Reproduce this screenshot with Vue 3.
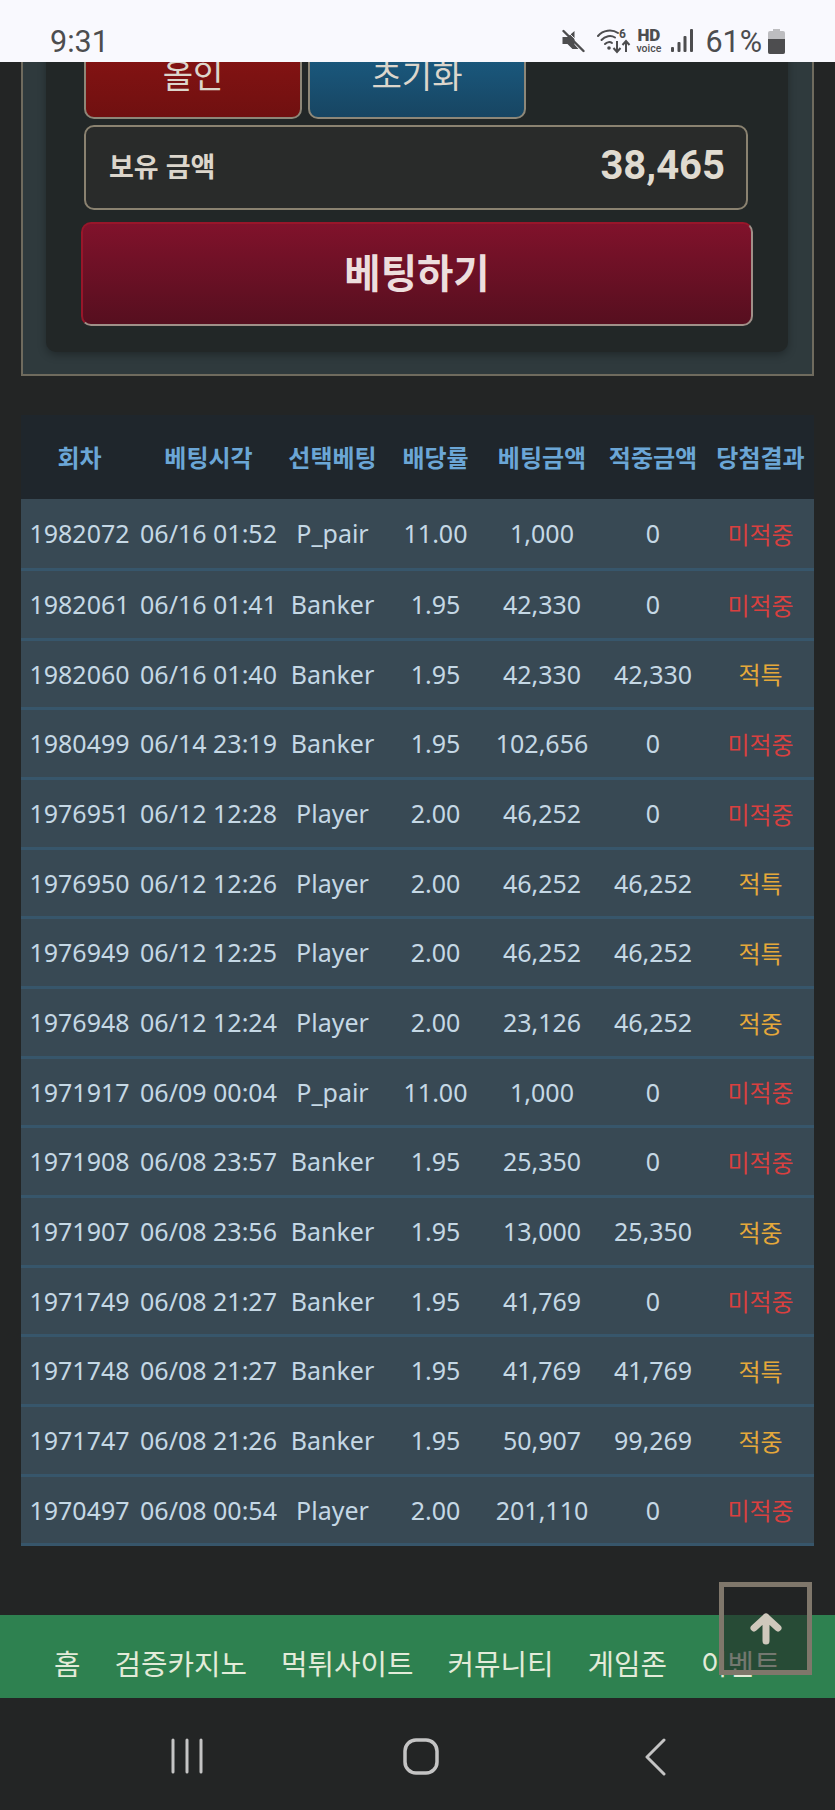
<template>
  <div class="screen">
    <div class="status-bar">
      <span class="clock">9:31</span>
      <div class="status-icons">
        <svg class="ic-mute" width="24" height="24" viewBox="0 0 23 24">
          <path d="M1 8h5l7-6v13.5L17 20H11l-5-5H1z" fill="#4d4d4f" />
          <path d="M2 2l20 20" stroke="#4d4d4f" stroke-width="2.4" stroke-linecap="round" />
          <path d="M2 2l20 20" stroke="#f9f9fe" stroke-width="1" transform="translate(1.8 -1.6)" />
        </svg>
        <svg class="ic-wifi" width="34" height="26" viewBox="0 0 34 26">
          <g fill="none" stroke="#4d4d4f" stroke-width="2" stroke-linecap="round">
            <path d="M1 8C6 2 15 1 21 5" />
            <path d="M4.5 12C8 8 14 7 18 9.5" />
            <path d="M8 16c2-2 5-2.500 7-1" />
          </g>
          <circle cx="12" cy="20" r="1.800" fill="#4d4d4f" />
          <text x="22" y="10" class="wifi-six">6</text>
          <path d="M20 13v11m-3.500-4l3.500 4 3.500-4M29 24V13m-3.500 4l3.500-4 3.500 4" fill="none" stroke="#4d4d4f" stroke-width="2" />
        </svg>
        <div class="hd">
          <span class="hd-top">HD</span>
          <span class="hd-sub">voice</span>
        </div>
        <svg class="ic-signal" width="22" height="24" viewBox="0 0 22 24">
          <rect x="0" y="18" width="3" height="5" rx="1" fill="#4d4d4f" />
          <rect x="6.500" y="13" width="3" height="10" rx="1" fill="#4d4d4f" />
          <rect x="12.500" y="7" width="3" height="16" rx="1" fill="#4d4d4f" />
          <rect x="19" y="0" width="3" height="23" rx="1" fill="#4d4d4f" />
        </svg>
        <span class="battery-pct">61%</span>
        <svg class="ic-battery" width="17" height="25" viewBox="0 0 17 25">
          <path d="M5 0h7v2h3a2 2 0 0 1 2 2v19a2 2 0 0 1-2 2H2a2 2 0 0 1-2-2V4a2 2 0 0 1 2-2h3z" fill="#bdbdc0" />
          <path d="M0 10h17v13a2 2 0 0 1-2 2H2a2 2 0 0 1-2-2z" fill="#4d4d4f" />
        </svg>
      </div>
    </div>

    <main class="content">
      <section class="panel">
        <div class="card">
          <div class="quick-row">
            <button class="quick allin">올인</button>
            <button class="quick reset">초기화</button>
          </div>
          <div class="balance">
            <span class="balance-label">보유 금액</span>
            <span class="balance-value">38,465</span>
          </div>
          <button class="bet-btn">베팅하기</button>
        </div>
      </section>

      <table class="history">
        <colgroup>
          <col v-for="w in colWidths" :key="w.id" :style="{ width: w.px + 'px' }" />
        </colgroup>
        <thead>
          <tr>
            <th v-for="h in headers" :key="h">{{ h }}</th>
          </tr>
        </thead>
        <tbody>
          <tr v-for="r in rows" :key="r[0]">
            <td>{{ r[0] }}</td>
            <td>{{ r[1] }}</td>
            <td>{{ r[2] }}</td>
            <td>{{ r[3] }}</td>
            <td>{{ r[4] }}</td>
            <td>{{ r[5] }}</td>
            <td class="result" :class="{ miss: r[6] === '미적중' }">{{ r[6] }}</td>
          </tr>
        </tbody>
      </table>
    </main>

    <nav class="site-nav">
      <a v-for="m in menu" :key="m">{{ m }}</a>
    </nav>

    <div class="android-nav">
      <div class="nav-slot">
        <svg width="32" height="36" viewBox="0 0 32 36">
          <path d="M2 2v32M16 2v32M30 2v32" stroke="#c4c4c4" stroke-width="3" stroke-linecap="round" />
        </svg>
      </div>
      <div class="nav-slot">
        <svg width="36" height="37" viewBox="0 0 36 37">
          <rect x="2" y="2" width="32" height="33" rx="11" fill="none" stroke="#c4c4c4" stroke-width="3.500" />
        </svg>
      </div>
      <div class="nav-slot">
        <svg width="22" height="38" viewBox="0 0 22 38">
          <path d="M20 2L3 19l17 17" fill="none" stroke="#c4c4c4" stroke-width="3" stroke-linecap="round" stroke-linejoin="round" />
        </svg>
      </div>
    </div>

    <button class="to-top" aria-label="top">
      <svg width="32" height="32" viewBox="0 0 32 32">
        <path d="M16 4v24M4 15L16 4l12 11" fill="none" stroke="#cfc8bc" stroke-width="7" stroke-linecap="round" stroke-linejoin="round" />
      </svg>
    </button>
  </div>
</template>

<script setup>
const headers = ['회차', '베팅시각', '선택베팅', '배당률', '베팅금액', '적중금액', '당첨결과']

const colWidths = [
  { id: 'round', px: 117 },
  { id: 'time', px: 141 },
  { id: 'pick', px: 107 },
  { id: 'odds', px: 99 },
  { id: 'amount', px: 114 },
  { id: 'win', px: 108 },
  { id: 'result', px: 107 }
]

const rows = [
  ['1982072', '06/16 01:52', 'P_pair', '11.00', '1,000', '0', '미적중'],
  ['1982061', '06/16 01:41', 'Banker', '1.95', '42,330', '0', '미적중'],
  ['1982060', '06/16 01:40', 'Banker', '1.95', '42,330', '42,330', '적특'],
  ['1980499', '06/14 23:19', 'Banker', '1.95', '102,656', '0', '미적중'],
  ['1976951', '06/12 12:28', 'Player', '2.00', '46,252', '0', '미적중'],
  ['1976950', '06/12 12:26', 'Player', '2.00', '46,252', '46,252', '적특'],
  ['1976949', '06/12 12:25', 'Player', '2.00', '46,252', '46,252', '적특'],
  ['1976948', '06/12 12:24', 'Player', '2.00', '23,126', '46,252', '적중'],
  ['1971917', '06/09 00:04', 'P_pair', '11.00', '1,000', '0', '미적중'],
  ['1971908', '06/08 23:57', 'Banker', '1.95', '25,350', '0', '미적중'],
  ['1971907', '06/08 23:56', 'Banker', '1.95', '13,000', '25,350', '적중'],
  ['1971749', '06/08 21:27', 'Banker', '1.95', '41,769', '0', '미적중'],
  ['1971748', '06/08 21:27', 'Banker', '1.95', '41,769', '41,769', '적특'],
  ['1971747', '06/08 21:26', 'Banker', '1.95', '50,907', '99,269', '적중'],
  ['1970497', '06/08 00:54', 'Player', '2.00', '201,110', '0', '미적중']
]

const menu = ['홈', '검증카지노', '먹튀사이트', '커뮤니티', '게임존', '이벤트']
</script>

<style>
html,
body {
  margin: 0;
  background: #232525;
}
</style>

<style scoped>
.screen {
  position: relative;
  display: flex;
  flex-direction: column;
  width: 835px;
  height: 1810px;
  overflow: hidden;
  background: #232525;
  font-family: "Noto Sans", "Noto Sans CJK KR", sans-serif;
}

.status-bar {
  flex: none;
  display: flex;
  justify-content: space-between;
  align-items: center;
  box-sizing: border-box;
  height: 62px;
  padding: 20px 50px 0 50px;
  background: #f9f9fe;
  color: #4d4d4f;
  font-family: Roboto, sans-serif;
}

.clock {
  font-size: 30.5px;
}

.status-icons {
  display: flex;
  align-items: center;
}

.ic-wifi {
  margin-left: 12px;
}

.hd {
  display: flex;
  flex-direction: column;
  align-items: center;
  width: 27px;
  margin-left: 4px;
}

.hd-top {
  font-size: 17px;
  font-weight: 900;
  line-height: 15px;
}

.hd-sub {
  font-size: 10.5px;
  font-weight: 500;
  line-height: 11px;
}

.wifi-six {
  font-family: Roboto, sans-serif;
  font-size: 12px;
  font-weight: 700;
  fill: #4d4d4f;
}

.ic-signal {
  margin-left: 9px;
}

.battery-pct {
  margin-left: 12px;
  font-size: 30.5px;
}

.ic-battery {
  margin-left: 6px;
}

.content {
  flex: 1;
  min-height: 0;
  overflow: hidden;
  padding: 0 21px;
}

.panel {
  box-sizing: border-box;
  margin-top: -60px;
  padding: 20px 24px 22px 23px;
  border: 2px solid #6f6b5e;
  background: #2f3a3d;
}

.card {
  padding: 10px 35px 26px 38px;
  border-radius: 10px;
  background: #222727;
  box-shadow: 0 3px 8px rgba(0, 0, 0, 0.3);
}

.quick-row {
  display: flex;
  gap: 6px;
}

.quick {
  box-sizing: border-box;
  width: 218px;
  height: 85px;
  padding: 0 0 5px;
  border: 2px solid #8d8778;
  border-radius: 10px;
  color: #dcd6cc;
  font-family: inherit;
  font-size: 33px;
}

.allin {
  background: linear-gradient(#8a1414, #701010);
}

.reset {
  background: linear-gradient(#1b6088, #174562);
}

.balance {
  display: flex;
  justify-content: space-between;
  align-items: center;
  box-sizing: border-box;
  width: 664px;
  height: 85px;
  margin-top: 6px;
  padding: 0 21px 5px 23px;
  border: 2px solid #8a8270;
  border-radius: 10px;
  background: #292b2a;
}

.balance-label {
  color: #dcd6cc;
  font-size: 27px;
  font-weight: 700;
}

.balance-value {
  color: #e0dbd0;
  font-family: Roboto, sans-serif;
  font-size: 40px;
  font-weight: 700;
}

.bet-btn {
  display: block;
  box-sizing: border-box;
  width: 672px;
  height: 104px;
  margin: 12px 0 0 -3px;
  padding: 0 0 6px;
  border: 2px solid #a09088;
  border-top-color: #98162a;
  border-left-color: #98162a;
  border-radius: 10px;
  background: linear-gradient(#80122b, #560f1f);
  color: #eddedd;
  font-family: inherit;
  font-size: 39.5px;
  font-weight: 700;
}

.history {
  width: 793px;
  margin-top: 39px;
  border-collapse: collapse;
  table-layout: fixed;
}

.history th {
  height: 82px;
  padding: 0 0 2px;
  background: #1f262c;
  color: #6ba6d6;
  font-size: 24px;
  font-weight: 700;
  white-space: nowrap;
}

.history td {
  box-sizing: border-box;
  height: 70px;
  padding: 0;
  border-bottom: 3px solid #37566b;
  background: #384954;
  color: #c5d8e5;
  font-size: 25px;
  text-align: center;
  white-space: nowrap;
}

/* rows are about 69.65px in the shot, tables round that up */
.history tr:nth-child(3n) td {
  height: 69px;
}

.history td.result {
  color: #e5a83a;
  font-size: 24px;
}

.history td.miss {
  color: #d9403f;
}

.site-nav {
  flex: none;
  display: flex;
  gap: 34px;
  box-sizing: border-box;
  height: 83px;
  padding: 24px 0 0 54px;
  overflow: hidden;
  background: #2e8150;
  color: #e3ebd9;
  font-size: 28.8px;
  line-height: 50px;
  white-space: nowrap;
}

.android-nav {
  flex: none;
  display: grid;
  grid-template-columns: repeat(3, 234px);
  box-sizing: border-box;
  height: 112px;
  padding: 40px 0 0 70px;
  background: #232525;
}

.nav-slot {
  display: flex;
  justify-content: center;
  align-items: flex-start;
}

.to-top {
  position: absolute;
  top: 1582px;
  left: 719px;
  display: flex;
  justify-content: center;
  box-sizing: border-box;
  width: 93px;
  height: 93px;
  padding: 26px 0 0;
  border: 5px solid #7f776b;
  background: rgba(34, 36, 36, 0.58);
}
</style>
